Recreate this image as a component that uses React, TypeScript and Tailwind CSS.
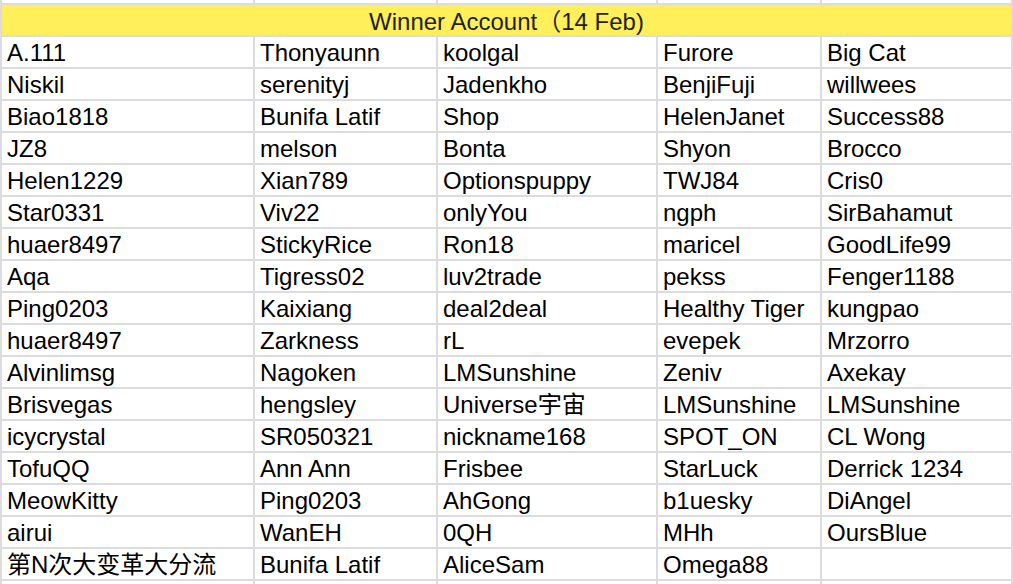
const rows: string[][] = [
  ['A.111', 'Thonyaunn', 'koolgal', 'Furore', 'Big Cat'],
  ['Niskil', 'serenityj', 'Jadenkho', 'BenjiFuji', 'willwees'],
  ['Biao1818', 'Bunifa Latif', 'Shop', 'HelenJanet', 'Success88'],
  ['JZ8', 'melson', 'Bonta', 'Shyon', 'Brocco'],
  ['Helen1229', 'Xian789', 'Optionspuppy', 'TWJ84', 'Cris0'],
  ['Star0331', 'Viv22', 'onlyYou', 'ngph', 'SirBahamut'],
  ['huaer8497', 'StickyRice', 'Ron18', 'maricel', 'GoodLife99'],
  ['Aqa', 'Tigress02', 'luv2trade', 'pekss', 'Fenger1188'],
  ['Ping0203', 'Kaixiang', 'deal2deal', 'Healthy Tiger', 'kungpao'],
  ['huaer8497', 'Zarkness', 'rL', 'evepek', 'Mrzorro'],
  ['Alvinlimsg', 'Nagoken', 'LMSunshine', 'Zeniv', 'Axekay'],
  ['Brisvegas', 'hengsley', 'Universe宇宙', 'LMSunshine', 'LMSunshine'],
  ['icycrystal', 'SR050321', 'nickname168', 'SPOT_ON', 'CL Wong'],
  ['TofuQQ', 'Ann Ann', 'Frisbee', 'StarLuck', 'Derrick 1234'],
  ['MeowKitty', 'Ping0203', 'AhGong', 'b1uesky', 'DiAngel'],
  ['airui', 'WanEH', '0QH', 'MHh', 'OursBlue'],
  ['第N次大变革大分流', 'Bunifa Latif', 'AliceSam', 'Omega88', ''],
]

const blank = ['', '', '', '', '']

export default function App() {
  return (
    <div
      className="h-[584px] w-[1013px] overflow-hidden bg-white"
      style={{ fontFamily: '"Liberation Sans", "Noto Sans CJK SC", sans-serif' }}
    >
      <div className="grid grid-cols-[251px_181px_218px_162px_189px] gap-[2px] bg-[#dcdce0] px-[2px] text-[24px] text-black">
        {/* partial row cut off at the top */}
        {blank.map((_, i) => (
          <div key={'top' + i} className="h-[3px] bg-white" />
        ))}

        <div className="col-span-5 h-[30px] overflow-hidden bg-[#ffef5b] text-center leading-[34px] text-[#1f1f1f]">
          Winner Account（14 Feb)
        </div>

        {rows.map((row, r) =>
          row.map((name, c) => (
            <div
              key={r + '-' + c}
              className="h-[30px] overflow-hidden whitespace-nowrap bg-white pl-[5px] leading-[32px]"
            >
              {name}
            </div>
          ))
        )}

        {/* partial row at the bottom */}
        {blank.map((_, i) => (
          <div key={'bot' + i} className="h-[30px] bg-white" />
        ))}
      </div>
    </div>
  )
}
